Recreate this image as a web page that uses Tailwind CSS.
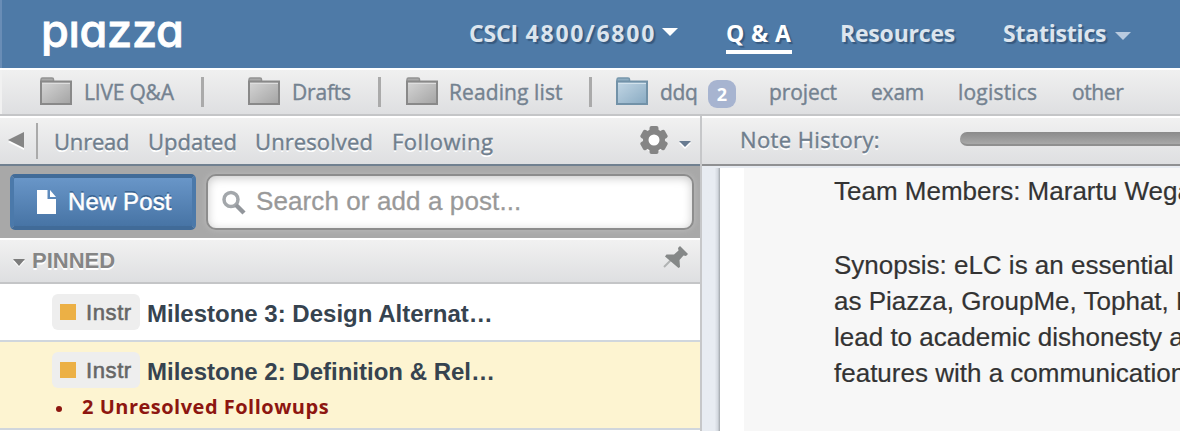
<!DOCTYPE html>
<html lang="en">
<head>
<meta charset="utf-8">
<title>Piazza</title>
<script src="https://cdn.jsdelivr.net/npm/@tailwindcss/browser@4"></script>
</head>
<body class="h-[431px] w-[1180px] overflow-hidden bg-white whitespace-nowrap font-['Open_Sans','Noto_Sans',sans-serif]">
<svg class="absolute h-0 w-0">
  <defs>
    <linearGradient id="gray" x1="0" y1="0" x2="1" y2="1"><stop offset="0" stop-color="#d6d6d6"/><stop offset="1" stop-color="#a3a3a3"/></linearGradient>
    <linearGradient id="blue" x1="0" y1="0" x2="1" y2="1"><stop offset="0" stop-color="#c3d7e5"/><stop offset="1" stop-color="#88aac2"/></linearGradient>
  </defs>
  <symbol id="folder" viewBox="0 0 32 28">
    <path d="M1 5V2.500Q1 1 2.500 1H12Q13.500 1 13.500 2.500V5" fill="#a9a9a9" stroke="#939393" stroke-width="1.500"/>
    <rect x="1" y="4.500" width="30" height="22.500" fill="url(#gray)" stroke="#898989" stroke-width="2"/>
    <path d="M2 6.500H30" stroke="#dedede" stroke-width="1"/>
  </symbol>
  <symbol id="folder-blue" viewBox="0 0 32 28">
    <path d="M1 5V2.500Q1 1 2.500 1H12Q13.500 1 13.500 2.500V5" fill="#8fadc1" stroke="#7797ac" stroke-width="1.500"/>
    <rect x="1" y="4.500" width="30" height="22.500" fill="url(#blue)" stroke="#7292a8" stroke-width="2"/>
    <path d="M2 6.500H30" stroke="#d2e2ec" stroke-width="1"/>
  </symbol>
</svg>

<header class="flex h-[68px] items-start border-l-2 border-[#698db6] bg-[#4e7aa7] text-[23px] leading-[32px] font-bold text-[#dce5ee]">
  <div class="ml-[39px] mt-[2px] w-[428px] font-['Inter'] text-[45px] leading-[58px] font-medium tracking-[-0.3px] text-white [-webkit-text-stroke:0.8px_#fff] [clip-path:inset(17px_0_0_0)] [font-feature-settings:'cv11']">piazza</div>
  <nav class="flex pt-[17px]">
    <div class="flex w-[257px]">
      <span class="w-[193px] tracking-[-0.2px] [text-shadow:2px_2px_1px_#37597f]">CSCI <span class="ml-[2px] tracking-[1.75px]">4800/6800</span></span>
      <svg class="mt-[11px] h-[8px] w-[16px]" viewBox="0 0 16 8"><path d="M0 0H16L8 8Z" fill="#fff"/></svg>
    </div>
    <div class="w-[114px]"><div class="h-[37px] w-[66px] border-b-4 border-white tracking-[0.4px] text-white [text-shadow:2px_2px_1px_#37597f]">Q &amp; A</div></div>
    <span class="w-[163px] tracking-[-0.2px] [text-shadow:2px_2px_1px_#37597f]">Resources</span>
    <div class="flex">
      <span class="w-[112px] tracking-[-0.2px] [text-shadow:2px_2px_1px_#37597f]">Statistics</span>
      <svg class="mt-[15px] h-[8px] w-[16px]" viewBox="0 0 16 8"><path d="M0 0H16L8 8Z" fill="#b9cbe0"/></svg>
    </div>
  </nav>
</header>

<section class="h-[48px] border-t-2 border-b-2 border-t-white border-b-[#c4c5c7] bg-linear-to-b from-[#f0f0f0] to-[#dedfe1]">
  <div class="flex h-[44px] items-center border-l-2 border-[#f1f1f1] pl-[38px] text-[21px] text-[#748290] [-webkit-text-stroke:0.4px_#748290]">
    <div class="flex w-[208px] items-center">
      <svg class="-mt-[3px] h-[28px] w-[32px]"><use href="#folder"/></svg>
      <span class="mt-[2px] ml-[12px] w-[117px] tracking-[-0.2px]">LIVE Q&amp;A</span>
      <i class="h-[30px] w-[3px] bg-[#aaaaaa]"></i>
    </div>
    <div class="flex w-[158px] items-center">
      <svg class="-mt-[3px] h-[28px] w-[32px]"><use href="#folder"/></svg>
      <span class="mt-[2px] ml-[12px] w-[86px] tracking-[-0.2px]">Drafts</span>
      <i class="h-[30px] w-[3px] bg-[#aaaaaa]"></i>
    </div>
    <div class="flex w-[210px] items-center">
      <svg class="-mt-[3px] h-[28px] w-[32px]"><use href="#folder"/></svg>
      <span class="mt-[2px] ml-[11px] w-[140px] tracking-[0.1px]">Reading list</span>
      <i class="h-[30px] w-[3px] bg-[#aaaaaa]"></i>
    </div>
    <div class="flex w-[153px] items-center">
      <svg class="-mt-[3px] h-[28px] w-[32px]"><use href="#folder-blue"/></svg>
      <span class="mt-[2px] ml-[12px] w-[48px] tracking-[-0.3px]">ddq</span>
      <span class="mt-[3px] h-[28px] w-[28px] rounded-[9px] bg-[#a7b4d0] text-center text-[18px] leading-[28px] font-bold text-white [-webkit-text-stroke:0px]">2</span>
    </div>
    <span class="mt-[2px] w-[102px] tracking-[-0.1px]">project</span>
    <span class="mt-[2px] w-[87px] tracking-[-0.2px]">exam</span>
    <span class="mt-[2px] w-[114px] tracking-[0.2px]">logistics</span>
    <span class="mt-[2px] tracking-[-0.4px]">other</span>
  </div>
</section>

<main class="flex h-[315px]">
  <aside class="w-[702px] shrink-0 border-r-2 border-[#c6c7c9]">
    <div class="flex h-[50px] items-center border-t-2 border-b-2 border-t-white border-b-[#708090] bg-linear-to-b from-[#f1f1f1] to-[#dedfe1] text-[22px] text-[#6f7e8d] [-webkit-text-stroke:0.4px_#6f7e8d] [text-shadow:0_2px_0_#fff]">
      <svg class="ml-[8px] h-[18px] w-[16px]" viewBox="0 0 16 18"><path d="M16 2V18L0 10Z" fill="#fff"/><path d="M16 0V16L0 8Z" fill="#858585"/></svg>
      <i class="ml-[12px] h-[36px] w-[2px] bg-[#aaa]"></i>
      <span class="mt-[1px] ml-[16px] w-[94px] tracking-[-0.2px]">Unread</span>
      <span class="mt-[1px] w-[107px]">Updated</span>
      <span class="mt-[1px] w-[137px] tracking-[0.1px]">Unresolved</span>
      <span class="mt-[1px] w-[248px] tracking-[0.5px]">Following</span>
      <svg class="h-[30px] w-[28px]" viewBox="0 0 28 30">
        <g transform="translate(14 16)" fill="#fff"><circle r="10.500"/></g>
        <g transform="translate(14 14)" fill="#858585">
          <path fill-rule="evenodd" d="M-11 0A11 11 0 1 0 11 0A11 11 0 1 0 -11 0M-5.500 0A5.500 5.500 0 1 1 5.500 0A5.500 5.500 0 1 1 -5.500 0"/>
          <g id="tooth"><rect x="-4.500" y="-14" width="9" height="6" rx="2"/><rect x="-4.500" y="8" width="9" height="6" rx="2"/></g>
          <use href="#tooth" transform="rotate(60)"/><use href="#tooth" transform="rotate(120)"/>
        </g>
      </svg>
      <svg class="mt-[7px] ml-[11px] h-[8px] w-[12px]" viewBox="0 0 12 8"><path d="M0 2H12L6 8Z" fill="#fff"/><path d="M0 0H12L6 6Z" fill="#687b91"/></svg>
    </div>

    <div class="flex h-[72px] items-start bg-[#a8a8a8] pt-[8px] pl-[10px] font-['Liberation_Sans',Arial,sans-serif]">
      <div class="flex h-[56px] w-[186px] items-center rounded-[5px] border-4 border-[#416b98] border-x-[#4b79aa] bg-linear-to-b from-[#6996c8] to-[#4774a5] text-[24px] text-white">
        <svg class="ml-[23px] h-[24px] w-[19px]" viewBox="0 0 19 24"><path d="M0 0H10.500V9H19V24H0ZM13 0L19 7H13Z" fill="#fff"/></svg>
        <span class="ml-[12px] tracking-[0.1px] [-webkit-text-stroke:0.5px_#fff] [text-shadow:0_-2px_0_#3b6592]">New Post</span>
      </div>
      <div class="ml-[10px] flex h-[56px] w-[488px] items-center rounded-[10px] border-2 border-[#8d8d8d] bg-white text-[26px] text-[#999] shadow-[inset_0_2px_10px_#c9c9c9,0_0_6px_#bcbcbc]">
        <svg class="ml-[14px] h-[25px] w-[24px]" viewBox="0 0 24 25" fill="none"><circle cx="9" cy="9.500" r="7" stroke="#a3a7ab" stroke-width="3.500"/><path d="M14 15L22 23" stroke="#92969b" stroke-width="4.500"/></svg>
        <span class="-mt-[2px] ml-[10px] tracking-[0.1px] [-webkit-text-stroke:0.3px_#999]">Search or add a post...</span>
      </div>
    </div>

    <div class="flex h-[46px] items-center border-t-2 border-b-2 border-t-white border-b-[#c4c5c7] bg-linear-to-b from-[#f1f1f1] to-[#dedfe1] font-['Liberation_Sans',Arial,sans-serif] text-[22px] font-bold text-[#858585]">
      <svg class="mt-[4px] ml-[13px] h-[8px] w-[12px]" viewBox="0 0 12 8"><path d="M0 2H12L6 8Z" fill="#fff"/><path d="M0 0H12L6 7Z" fill="#7c7c7c"/></svg>
      <span class="-mt-[2px] ml-[7px] w-[630px] [text-shadow:0_2px_0_#fff]">PINNED</span>
      <svg class="-mt-[6px] h-[24px] w-[26px]" viewBox="0 0 26 24"><path d="M9.500 13.500L2 21" stroke="#b0b3b3" stroke-width="2"/><path d="M18 0L26 8L24 10L21.500 9.500L17.500 14L18 21L16.500 22L3 10.500L4.500 8.500L12 8.500L16.500 4.500L16 2Z" fill="#858888"/></svg>
    </div>

    <article class="flex h-[58px] items-start border-b-2 border-[#d0d6dd] bg-white pt-[10px] pl-[52px] font-['Liberation_Sans',Arial,sans-serif]">
      <div class="flex h-[36px] w-[88px] items-center rounded-[6px] bg-[#eeeeee] pl-[8px] text-[22px] text-[#666] [-webkit-text-stroke:0.6px_#666]"><i class="h-[16px] w-[16px] bg-[#ecb045]"></i><span class="ml-[10px] tracking-[0.6px]">Instr</span></div>
      <h3 class="ml-[7px] text-[24px] leading-[40px] font-bold text-[#36434f]">Milestone 3: Design Alternat…</h3>
    </article>
    <article class="h-[88px] border-b-2 border-[#d0d6dd] bg-[#fdf4d1] pt-[10px] pl-[52px]">
      <div class="flex h-[36px] items-start font-['Liberation_Sans',Arial,sans-serif]">
        <div class="flex h-[36px] w-[88px] items-center rounded-[6px] bg-[#eeeeee] pl-[8px] text-[22px] text-[#666] [-webkit-text-stroke:0.6px_#666]"><i class="h-[16px] w-[16px] bg-[#ecb045]"></i><span class="ml-[10px] tracking-[0.6px]">Instr</span></div>
        <h3 class="ml-[7px] text-[24px] leading-[40px] font-bold text-[#36434f]">Milestone 2: Definition &amp; Rel…</h3>
      </div>
      <div class="mt-[4px] flex items-center text-[20px] leading-[30px] font-bold text-[#8d1610]"><i class="mt-[4px] ml-[4px] h-[6px] w-[6px] rounded-full bg-[#8d1610]"></i><span class="ml-[20px] tracking-[0.5px]">2 Unresolved Followups</span></div>
    </article>
  </aside>

  <section class="w-[478px] shrink-0 bg-[#e8ecf2]">
    <div class="flex h-[50px] items-center border-t-2 border-b-2 border-t-white border-b-[#8f9092] bg-linear-to-b from-[#f1f1f1] to-[#dedfe1] text-[22px] text-[#6f7e8d]">
      <span class="-mt-[3px] ml-[38px] w-[220px] tracking-[0.4px] [-webkit-text-stroke:0.4px_#6f7e8d] [text-shadow:0_2px_0_#fff]">Note History:</span>
      <div class="-mt-[4px] h-[14px] w-[220px] rounded-l-[7px] border-b-2 border-[#8f8f8f] bg-linear-to-b from-[#8a8a8a] to-[#a8a8a8]"></div>
    </div>
    <div class="mt-[2px] flex h-[263px]">
      <div class="w-[18px] bg-linear-to-r from-[#e8ecf2] from-70% via-[#d3d8df] via-88% to-[#a0a5aa]"></div>
      <div class="w-[24px] bg-white"></div>
      <div class="w-[436px] overflow-hidden bg-[#f7f7f7] pt-[5px] pl-[90px] font-['Liberation_Sans',Arial,sans-serif] text-[26px] leading-[36px] text-[#333] [-webkit-text-stroke:0.2px_#333]">
        <p>Team Members: Marartu Wega</p>
        <p class="mt-[38px]">Synopsis: eLC is an essential<br>as Piazza, GroupMe, Tophat, K<br>lead to academic dishonesty a<br>features with a communication</p>
      </div>
    </div>
  </section>
</main>
</body>
</html>
